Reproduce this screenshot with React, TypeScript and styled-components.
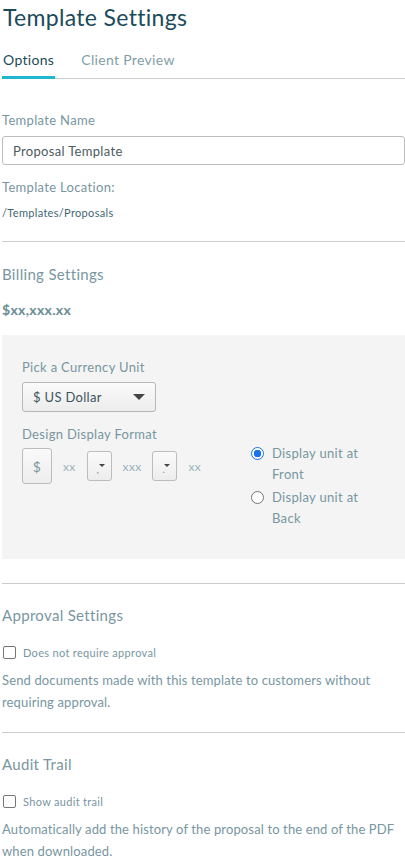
import React from "react";
import styled, { createGlobalStyle } from "styled-components";

const GlobalStyle = createGlobalStyle`
  html, body {
    margin: 0;
    padding: 0;
    background: #ffffff;
  }
  body {
    font-family: Lato, "Open Sans", Arial, sans-serif;
    letter-spacing: 0.02em;
    color: #7896a1;
  }
  * { box-sizing: border-box; }
`;

const Page = styled.div`
  padding: 0 0 0 2px;
  width: 405px;
`;

const Title = styled.h1`
  margin: 0;
  padding: 3px 0 0 1px;
  font-size: 23px;
  font-weight: 400;
  line-height: 28px;
  color: #1c4b5b;
`;

const Tabs = styled.div`
  display: flex;
  gap: 25px;
  margin-top: 20px;
  border-bottom: 1px solid #cccccc;
`;

const Tab = styled.div<{ $active?: boolean }>`
  padding: 0 1px 7px;
  font-size: 14px;
  line-height: 18px;
  color: ${(p) => (p.$active ? "#1c4b5b" : "#7f9ea8")};
  border-bottom: 3px solid ${(p) => (p.$active ? "#1fb6cf" : "transparent")};
  margin-bottom: -1px;
`;

const Section = styled.section<{ $top?: number; $bottom?: number }>`
  padding: ${(p) => p.$top ?? 21}px 0 ${(p) => p.$bottom ?? 19}px;
  border-bottom: 1px solid #cccccc;
`;

const LastSection = styled(Section)`
  border-bottom: none;
`;

const Label = styled.div<{ $gap?: number }>`
  margin-top: ${(p) => p.$gap ?? 0}px;
  font-size: 13px;
  line-height: 16px;
  color: #7896a1;
`;

const TextInput = styled.div`
  margin-top: 8px;
  height: 29px;
  border: 1px solid #bdbdbd;
  border-radius: 3px;
  padding: 0 10px;
  display: flex;
  align-items: center;
  font-size: 13px;
  color: #4c5a60;
`;

const Path = styled.div`
  margin-top: 11px;
  font-size: 11px;
  color: #3f6676;
`;

const Heading = styled.h2`
  margin: 0;
  font-size: 15px;
  font-weight: 400;
  line-height: 20px;
  color: #7896a1;
`;

const Amount = styled.div`
  margin-top: 17px;
  font-size: 14px;
  font-weight: 700;
  color: #6b8d97;
`;

const Panel = styled.div`
  margin-top: 17px;
  background: #f4f4f4;
  padding: 24px 20px 30px;
  display: flex;
  align-items: flex-start;
  justify-content: space-between;
`;

const Column = styled.div`
  display: flex;
  flex-direction: column;
`;

const Select = styled.div<{ $width: number }>`
  margin: 7px 0 14px;
  width: ${(p) => p.$width}px;
  height: 30px;
  border: 1px solid #b8b8b8;
  border-radius: 3px;
  background: linear-gradient(#fafafa, #ececec);
  display: flex;
  align-items: center;
  justify-content: space-between;
  padding: 0 10px;
  font-size: 13px;
  color: #3d5560;
`;

const Caret = styled.span<{ $size: number }>`
  width: 0;
  height: 0;
  border-left: ${(p) => p.$size}px solid transparent;
  border-right: ${(p) => p.$size}px solid transparent;
  border-top: ${(p) => p.$size}px solid #444;
`;

const FormatRow = styled.div`
  margin-top: 6px;
  display: flex;
  align-items: center;
  gap: 11px;
`;

const UnitBox = styled.div`
  width: 30px;
  height: 36px;
  border: 1px solid #bcbcbc;
  border-radius: 3px;
  background: linear-gradient(#fafafa, #ededed);
  display: flex;
  align-items: center;
  justify-content: center;
  font-size: 14px;
  color: #7896a1;
`;

const Separator = styled.div`
  width: 25px;
  height: 30px;
  border: 1px solid #bcbcbc;
  border-radius: 3px;
  background: linear-gradient(#fafafa, #ededed);
  position: relative;
`;

const SepMark = styled.span`
  position: absolute;
  left: 9px;
  top: 12px;
  font-size: 10px;
  line-height: 10px;
  color: #7896a1;
`;

const SmallCaret = styled.span`
  position: absolute;
  left: 11px;
  top: 12px;
  width: 0;
  height: 0;
  border-left: 3px solid transparent;
  border-right: 3px solid transparent;
  border-top: 3px solid #444;
`;

const Digits = styled.span`
  font-size: 12px;
  color: #9ab2ba;
`;

const Radios = styled.div`
  width: 134px;
  padding-top: 84px;
  display: flex;
  flex-direction: column;
  gap: 2px;
`;

const RadioRow = styled.label`
  display: flex;
  align-items: flex-start;
  gap: 8px;
  padding-right: 12px;
  font-size: 13px;
  line-height: 21px;
  color: #7896a1;
`;

const RadioDot = styled.span<{ $on?: boolean }>`
  flex: none;
  margin-top: 4px;
  width: 13px;
  height: 13px;
  border-radius: 50%;
  border: 1px solid ${(p) => (p.$on ? "#1a73e8" : "#767676")};
  background: ${(p) =>
    p.$on ? "radial-gradient(circle, #1a73e8 0 3.5px, #fff 4px)" : "#fff"};
`;

const CheckRow = styled.label`
  margin-top: 21px;
  display: flex;
  align-items: center;
  gap: 7px;
  font-size: 11px;
  color: #7896a1;
`;

const CheckBox = styled.span`
  width: 13px;
  height: 13px;
  border: 1px solid #767676;
  border-radius: 2px;
  background: #fff;
  margin-left: 1px;
`;

const Note = styled.p`
  margin: 10px 0 0;
  font-size: 13px;
  line-height: 22px;
  letter-spacing: 0.01em;
  color: #7896a1;
`;

export default function App() {
  return (
    <Page>
      <GlobalStyle />
      <Title>Template Settings</Title>
      <Tabs>
        <Tab $active>Options</Tab>
        <Tab>Client Preview</Tab>
      </Tabs>

      <Section $top={33} $bottom={22}>
        <Label>Template Name</Label>
        <TextInput>Proposal Template</TextInput>
        <Label $gap={14}>Template Location:</Label>
        <Path>/Templates/Proposals</Path>
      </Section>

      <Section $top={22} $bottom={24}>
        <Heading>Billing Settings</Heading>
        <Amount>$xx,xxx.xx</Amount>
        <Panel>
          <Column>
            <Label>Pick a Currency Unit</Label>
            <Select $width={134}>
              $ US Dollar
              <Caret $size={6} />
            </Select>
            <Label>Design Display Format</Label>
            <FormatRow>
              <UnitBox>$</UnitBox>
              <Digits>xx</Digits>
              <Separator>
                <SepMark>,</SepMark>
                <SmallCaret />
              </Separator>
              <Digits>xxx</Digits>
              <Separator>
                <SepMark>.</SepMark>
                <SmallCaret />
              </Separator>
              <Digits>xx</Digits>
            </FormatRow>
          </Column>
          <Radios>
            <RadioRow>
              <RadioDot $on />
              <span>Display unit at Front</span>
            </RadioRow>
            <RadioRow>
              <RadioDot />
              <span>Display unit at Back</span>
            </RadioRow>
          </Radios>
        </Panel>
      </Section>

      <Section>
        <Heading>Approval Settings</Heading>
        <CheckRow>
          <CheckBox />
          Does not require approval
        </CheckRow>
        <Note>
          Send documents made with this template to customers without requiring
          approval.
        </Note>
      </Section>

      <LastSection>
        <Heading>Audit Trail</Heading>
        <CheckRow>
          <CheckBox />
          Show audit trail
        </CheckRow>
        <Note>
          Automatically add the history of the proposal to the end of the PDF
          when downloaded.
        </Note>
      </LastSection>
    </Page>
  );
}
